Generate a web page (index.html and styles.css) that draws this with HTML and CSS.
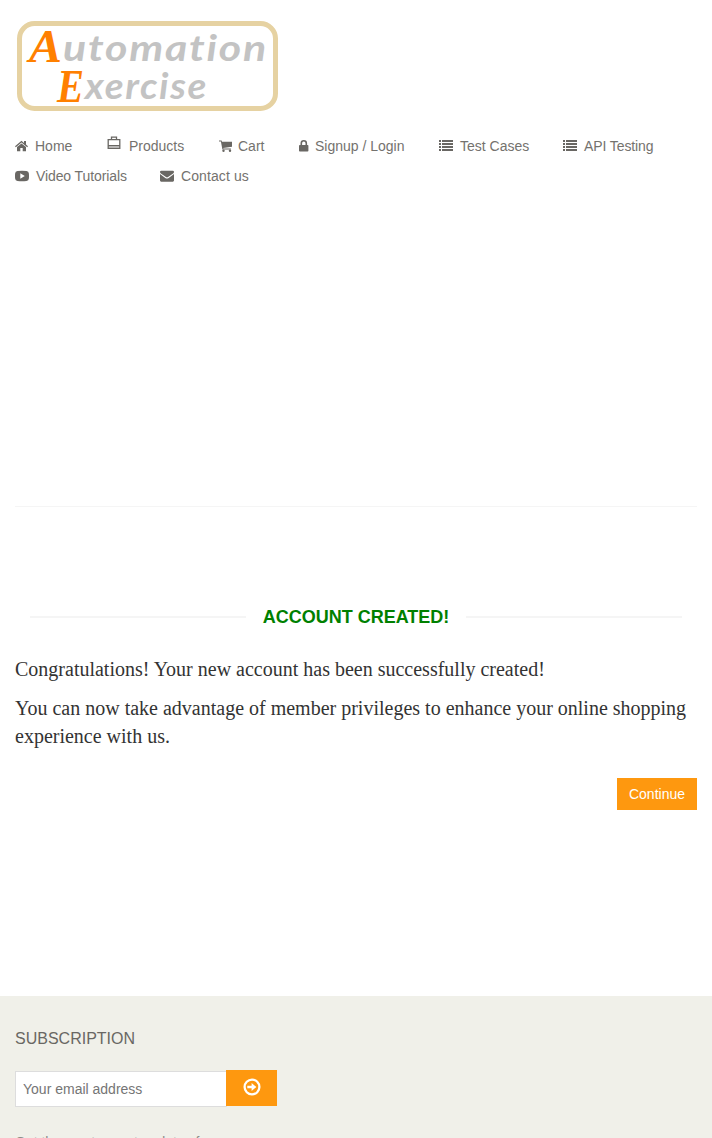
FILE: index.html
```html
<!DOCTYPE html>
<html lang="en">
<head>
<meta charset="utf-8">
<title>Automation Exercise - Account Created</title>
<link rel="stylesheet" href="styles.css">
</head>
<body>
<header class="header">
  <a class="logo"><svg width="264" height="92" viewBox="16 20 264 92" role="img" aria-label="Automation Exercise">
    <rect x="19.500" y="23.500" width="256" height="85" rx="15" fill="#fff" stroke="#e6d2a2" stroke-width="5"/>
    <text class="logo-cap" x="29" y="62" textLength="33" lengthAdjust="spacingAndGlyphs">A</text>
    <text class="logo-word" x="63" y="61" textLength="205" lengthAdjust="spacingAndGlyphs">utomation</text>
    <text class="logo-cap" x="57" y="102" textLength="27" lengthAdjust="spacingAndGlyphs">E</text>
    <text class="logo-word" x="85" y="99" textLength="123" lengthAdjust="spacingAndGlyphs">xercise</text>
  </svg></a>
  <nav>
    <ul class="menu">
      <li class="item home"><svg width="14" height="12" viewBox="0 0 14 12"><path d="M0 6.300L6.500.8L9 2.900V1h2v3.600l2 1.700-.8.9L6.500 2.400.8 7.200ZM2 7.100L6.500 3.400 11 7.100V11.300H7.700V8H5.300v3.300H2Z"/></svg><span>Home</span></li>
      <li class="item products"><svg class="bag" width="14" height="14" viewBox="0 0 14 14"><path d="M4.500 3.500V1.200h5v2.300M1.200 3.700h11.600v8.600H1.200ZM1.200 9.700h11.600" fill="none" stroke="#696763" stroke-width="1.300"/><path d="M1.500 10h11v2h-11z" opacity=".3"/></svg><span>Products</span></li>
      <li class="item cart"><svg width="13" height="12" viewBox="0 0 13 12"><path d="M0 .5h2.600L3 1.800h10v5L4.200 7.900l.2.500h7.500v1.100H3.400L1.900 1.600H0Z"/><circle cx="4.500" cy="10.700" r="1.200"/><circle cx="11" cy="10.700" r="1.200"/></svg><span>Cart</span></li>
      <li class="item login"><svg width="10" height="12" viewBox="0 0 10 12"><path d="M2.300 5V3.300a2.500 2.500 0 0 1 5 0V5" fill="none" stroke="#696763" stroke-width="1.600"/><rect y="5" width="9.400" height="6.500" rx=".8"/></svg><span>Signup / Login</span></li>
      <li class="item cases"><svg width="15" height="12" viewBox="0 0 15 12"><path d="M0 0h2v2H0zM3 0h11v2H3zM0 3h2v2H0zM3 3h11v2H3zM0 6h2v2H0zM3 6h11v2H3zM0 9h2v2H0zM3 9h11v2H3z"/></svg><span>Test Cases</span></li>
      <li class="item api"><svg width="15" height="12" viewBox="0 0 15 12"><path d="M1 0h2v2H1zM4 0h11v2H4zM1 3h2v2H1zM4 3h11v2H4zM1 6h2v2H1zM4 6h11v2H4zM1 9h2v2H1zM4 9h11v2H4z"/></svg><span>API Testing</span></li>
      <li class="item video"><svg width="14" height="12" viewBox="0 0 14 12"><path fill-rule="evenodd" d="M2.500.9Q7 .4 11.500.9 13.700 1 13.900 3.500q.2 2.500 0 5-.2 2.300-2.400 2.500-4.500.4-9 0Q.3 10.800.1 8.500q-.2-2.500 0-5Q.3 1 2.500.9ZM5.300 3.200v5.600l4.500-2.800Z"/></svg><span>Video Tutorials</span></li>
      <li class="item contact"><svg width="15" height="12" viewBox="0 0 15 12"><path d="M1.200.8h11.600q1.200 0 1.200 1.100Q14 3 12.800 3.800L8 7.100q-1 .6-2 0L1.200 3.800Q0 3 0 1.900 0 .8 1.200.8ZM0 4.100L5.300 7.900q1.700 1.100 3.400 0L14 4.100v6.500q0 1.100-1.200 1.100H1.200Q0 11.700 0 10.600Z"/></svg><span>Contact us</span></li>
    </ul>
  </nav>
</header>
<main class="main">
  <h2 class="title"><span>ACCOUNT CREATED!</span></h2>
  <p class="message">Congratulations! Your new account has been successfully created!</p>
  <p class="message">You can now take advantage of member privileges to enhance your online shopping experience with us.</p>
  <div class="actions"><a class="continue">Continue</a></div>
</main>
<footer class="footer">
  <h2 class="subscription">SUBSCRIPTION</h2>
  <form class="subscribe">
    <input class="email" type="email" placeholder="Your email address" aria-label="Email">
    <button class="send" type="button" aria-label="Subscribe"><svg width="18" height="18" viewBox="0 0 18 18"><circle cx="9" cy="9" r="7.400" fill="none" stroke="#fff" stroke-width="2.300"/><path d="M4.300 7.800h4.300V4.900L13.400 9l-4.800 4.100v-2.900H4.300Z" fill="#fff"/></svg></button>
  </form>
  <p class="note">Get the most recent updates from</p>
</footer>
</body>
</html>
```
FILE: styles.css
```css
* { box-sizing: border-box; }
html { overflow: hidden; }
body {
  margin: 0;
  height: 1138px;
  overflow: hidden;
  background: #fff;
  font-family: "Liberation Sans", Arial, sans-serif;
  font-size: 14px;
  color: #696763;
}
.header { height: 506px; padding: 20px 15px 0 16px; }
.logo, .logo svg { display: block; }
.logo-cap { font: italic 700 46px "Liberation Serif", serif; fill: #ff8000; }
.logo-word {
  font: italic 700 36px "Lato", sans-serif;
  font-variant-ligatures: none;
  letter-spacing: 1.5px;
  fill: #c3c3c3;
}
.menu {
  display: flex;
  flex-wrap: wrap;
  list-style: none;
  margin: 19px 0 0 -1px;
  padding: 0;
}
.item {
  display: flex;
  align-items: center;
  height: 30px;
  white-space: nowrap;
  color: #74726e;
}
.item svg { fill: #696763; flex: none; }
.item .bag { margin-top: -6px; }
.home { width: 92px; gap: 6px; }
.products { width: 112px; gap: 8px; }
.cart { width: 80px; gap: 6px; }
.login { width: 140px; gap: 6px; }
.cases { width: 123px; gap: 6px; }
.api { width: 110px; gap: 7px; letter-spacing: -0.1px; }
.video { width: 145px; gap: 7px; letter-spacing: -0.1px; }
.contact { width: 110px; gap: 6px; letter-spacing: 0.1px; }
.main {
  height: 490px;
  margin: 0 15px;
  padding-top: 100px;
  border-top: 1px solid #f5f5f5;
}
.title {
  display: flex;
  align-items: center;
  gap: 17px;
  height: 20px;
  margin: 0 15px 28px;
  font-size: 18px;
  font-weight: 700;
  line-height: 20px;
  color: green;
  white-space: nowrap;
}
.title::before, .title::after { content: ""; flex: 1; height: 2px; background: #f5f5f5; }
.message {
  margin: 0 0 11px;
  font: 20px/28px "Liberation Serif", "Times New Roman", serif;
  color: #333;
}
.actions { display: flex; justify-content: flex-end; margin-top: 28px; }
.continue {
  width: 80px;
  height: 32px;
  background: #fe980f;
  color: #fff;
  line-height: 32px;
  text-align: center;
}
.footer { height: 142px; padding: 33px 15px 0; background: #f0f0e9; overflow: hidden; }
.subscription { margin: 0 0 21px; font-size: 16px; font-weight: 400; line-height: 20px; }
.subscribe { display: flex; align-items: flex-start; }
.email {
  width: 212px;
  height: 36px;
  margin: 1px 0 0;
  padding: 0 7px;
  border: 1px solid #ddd;
  border-radius: 0;
  background: #fff;
  font: 14px "Liberation Sans", Arial, sans-serif;
}
.email::placeholder { color: #757575; opacity: 1; }
.send {
  display: flex;
  align-items: center;
  justify-content: center;
  width: 51px;
  height: 36px;
  margin-left: -1px;
  padding: 0 0 2px;
  border: 0;
  background: #fe980f;
}
.note { margin: 25px 0 0; line-height: 20px; color: #8c8c88; }
```
